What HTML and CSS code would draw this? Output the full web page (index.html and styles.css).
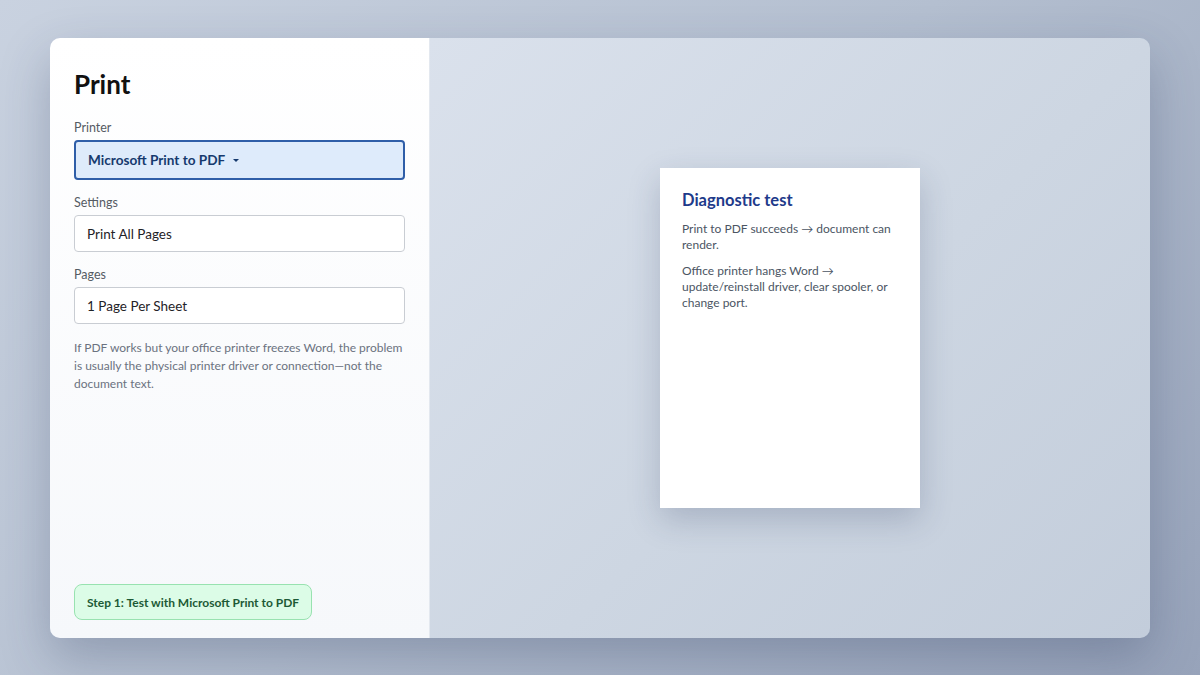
FILE: index.html
```html
<!DOCTYPE html>
<html lang="en">
<head>
<meta charset="utf-8">
<title>Print</title>
<link rel="stylesheet" href="styles.css">
</head>
<body>
<div class="stage">
  <div class="window">
    <aside class="panel">
      <h1 class="title">Print</h1>
      <div class="field">
        <div class="label">Printer</div>
        <div class="select active">Microsoft Print to PDF <span class="caret"></span></div>
      </div>
      <div class="field">
        <div class="label">Settings</div>
        <div class="select">Print All Pages</div>
      </div>
      <div class="field">
        <div class="label">Pages</div>
        <div class="select">1 Page Per Sheet</div>
      </div>
      <p class="help">If PDF works but your office printer freezes Word, the problem is usually the physical printer driver or connection—not the document text.</p>
      <div class="spacer"></div>
      <button class="step">Step 1: Test with Microsoft Print to PDF</button>
    </aside>
    <main class="preview">
      <div class="page">
        <h2 class="page-title">Diagnostic test</h2>
        <p class="page-text">Print to PDF succeeds → document can render.</p>
        <p class="page-text">Office printer hangs Word → update/reinstall driver, clear spooler, or change port.</p>
      </div>
    </main>
  </div>
</div>
</body>
</html>
```
FILE: styles.css
```css
* { box-sizing: border-box; }
html, body { margin: 0; padding: 0; }
body {
  width: 1200px;
  height: 675px;
  overflow: hidden;
  font-family: Lato, "Noto Sans", sans-serif;
}
.stage {
  width: 1200px;
  height: 675px;
  padding: 38px 50px 37px;
  background: linear-gradient(135deg, #c9d2e0 0%, #b4bfd0 50%, #97a3ba 100%);
}
.window {
  display: flex;
  height: 600px;
  border-radius: 10px;
  overflow: hidden;
  box-shadow: 0 20px 50px rgba(40, 55, 90, 0.28);
}
.panel {
  width: 380px;
  flex: none;
  display: flex;
  flex-direction: column;
  padding: 28px 24px 18px;
  background: linear-gradient(180deg, #ffffff 0%, #f6f8fb 100%);
  border-right: 1px solid #e3e8ef;
}
.title {
  margin: 0 0 18px;
  font-size: 26px;
  font-weight: 700;
  color: #111;
  line-height: 36px;
}
.field { margin-bottom: 15px; }
.label {
  font-size: 12.5px;
  color: #555b63;
  line-height: 16px;
  margin-bottom: 4px;
}
.select {
  height: 37px;
  border: 1px solid #c9cdd3;
  border-radius: 4px;
  background: #fff;
  display: flex;
  align-items: center;
  padding: 0 12px;
  font-size: 13.5px;
  color: #1f2328;
}
.select.active {
  height: 40px;
  border: 2px solid #2f5ea8;
  background: #deebfb;
  font-weight: 700;
  color: #163a6e;
  font-size: 13.6px;
}
.caret {
  display: inline-block;
  margin-left: 8px;
  width: 0; height: 0;
  border-left: 3px solid transparent;
  border-right: 3px solid transparent;
  border-top: 3px solid #163a6e;
}
.help {
  margin: 0;
  font-size: 12px;
  line-height: 18px;
  color: #6b7280;
}
.spacer { flex: 1; }
.step {
  align-self: flex-start;
  height: 36px;
  padding: 0 12px;
  border: 1px solid #98e2b0;
  border-radius: 8px;
  background: #dcfce7;
  color: #1d5a36;
  font-family: inherit;
  font-size: 12px;
  font-weight: 700;
}
.preview {
  flex: 1;
  display: flex;
  align-items: center;
  justify-content: center;
  background: linear-gradient(135deg, #dae1ec 0%, #cdd6e2 55%, #c3cddb 100%);
}
.page {
  width: 260px;
  height: 340px;
  background: #fff;
  padding: 22px 22px;
  box-shadow: 0 12px 30px rgba(40, 55, 90, 0.22);
}
.page-title {
  margin: 0 0 11px;
  font-size: 16.5px;
  font-weight: 700;
  color: #1e3a8a;
  line-height: 20px;
}
.page-text {
  margin: 0 0 10px;
  font-size: 12px;
  line-height: 16px;
  color: #4b5563;
}
```
